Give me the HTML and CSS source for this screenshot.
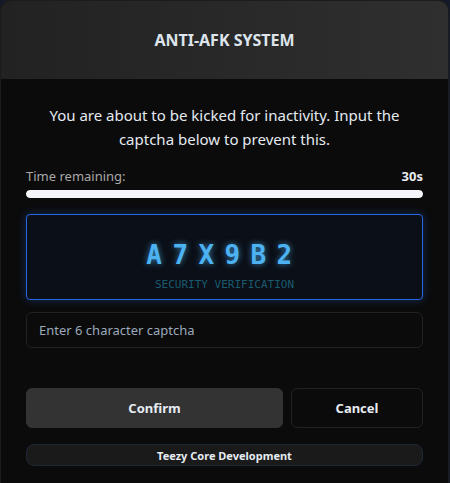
FILE: index.html
```html
<!DOCTYPE html>
<html>
<head>
<meta charset="utf-8">
<link rel="stylesheet" href="styles.css">
</head>
<body>
<div class="modal">
  <div class="header"><h1 class="title">ANTI-AFK SYSTEM</h1></div>
  <div class="content">
    <p class="message">You are about to be kicked for inactivity. Input the captcha below to prevent this.</p>
    <div class="timer">
      <div class="timer-row"><span class="timer-label">Time remaining:</span><span class="timer-value">30s</span></div>
      <div class="bar"><div class="bar-fill" style="width:100%"></div></div>
    </div>
    <div class="captcha">
      <div class="code">A7X9B2</div>
      <div class="caption">SECURITY VERIFICATION</div>
    </div>
    <input class="input" type="text" placeholder="Enter 6 character captcha">
    <div class="actions">
      <button class="btn btn-confirm">Confirm</button>
      <button class="btn btn-cancel">Cancel</button>
    </div>
    <div class="footer">Teezy Core Development</div>
  </div>
</div>
</body>
</html>
```
FILE: styles.css
```css
* { box-sizing: border-box; }
html, body { margin: 0; padding: 0; }
body {
  background: #151a2a;
  width: 450px;
  height: 483px;
  overflow: hidden;
  font-family: "Noto Sans", "Open Sans", sans-serif;
}
.modal {
  width: 449px;
  height: 493px;
  background: #0b0b0b;
  border: 1px solid #1c1c1c;
  border-radius: 10px;
  overflow: hidden;
  display: flex;
  flex-direction: column;
}
.header {
  height: 78px;
  background: linear-gradient(90deg, #222222, #2f2f2f);
  display: flex;
  align-items: center;
  justify-content: center;
}
.title {
  margin: 0;
  font-size: 16px;
  font-weight: 700;
  color: #dde4ec;
}
.content {
  padding: 24px 25px 0 25px;
  display: flex;
  flex-direction: column;
}
.message {
  margin: 0;
  text-align: center;
  font-size: 15px;
  line-height: 24px;
  color: #e4eaf0;
}
.timer { margin-top: 16px; }
.timer-row {
  display: flex;
  justify-content: space-between;
  font-size: 13px;
  line-height: 18px;
}
.timer-label { color: #a8a8a8; }
.timer-value { color: #e8ecf2; font-weight: 700; }
.bar {
  margin-top: 5px;
  height: 8px;
  border-radius: 4px;
  background: #2a2a2a;
  overflow: hidden;
}
.bar-fill { height: 100%; background: #f4f6f9; border-radius: 4px; }
.captcha {
  margin-top: 16px;
  height: 86px;
  border: 1px solid #2767e0;
  border-radius: 4px;
  background: #0b0f17;
  box-shadow: 0 0 10px rgba(39, 103, 224, 0.35);
  display: flex;
  flex-direction: column;
  align-items: center;
  padding-top: 23px;
}
.code {
  font-family: "DejaVu Sans Mono", monospace;
  font-weight: 700;
  font-size: 26px;
  line-height: 34px;
  letter-spacing: 10.4px;
  color: #4cb2f2;
  text-shadow: 0 0 6px rgba(76, 178, 242, 0.7);
}
.caption {
  margin-top: 6px;
  font-family: "DejaVu Sans Mono", monospace;
  font-size: 11px;
  line-height: 14px;
  color: #1a5a6e;
}
.input {
  margin-top: 12px;
  height: 36px;
  border: 1px solid #222222;
  border-radius: 6px;
  background: #0b0b0b;
  padding: 0 12px;
  font-family: inherit;
  font-size: 13px;
  color: #e0e6ee;
  outline: none;
}
.input::placeholder { color: #9aaabb; }
.actions {
  margin-top: 40px;
  display: flex;
  gap: 8px;
}
.btn {
  height: 40px;
  border-radius: 6px;
  font-family: inherit;
  font-weight: 700;
  font-size: 13px;
  color: #e6ecf2;
  cursor: pointer;
}
.btn-confirm { flex: 0 0 257px; background: #333333; border: 1px solid #333333; }
.btn-cancel { flex: 1; background: #0b0b0b; border: 1px solid #222222; }
.footer {
  margin-top: 16px;
  height: 22px;
  border: 1px solid #1e2838;
  border-radius: 8px;
  background: #1a1a1a;
  display: flex;
  align-items: center;
  justify-content: center;
  font-size: 11px;
  font-weight: 700;
  color: #e6ecf2;
}
```
